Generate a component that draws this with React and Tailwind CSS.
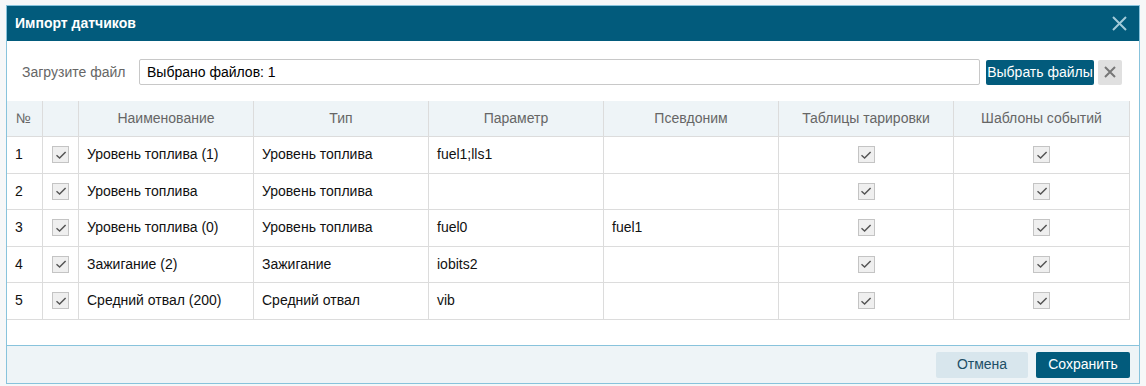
import React from "react";

const cols = [
  { w: "w-[36px]", label: "№", align: "left" },
  { w: "w-[36px]", label: "", align: "center" },
  { w: "w-[175px]", label: "Наименование", align: "center" },
  { w: "w-[175px]", label: "Тип", align: "center" },
  { w: "w-[175px]", label: "Параметр", align: "center" },
  { w: "w-[175px]", label: "Псевдоним", align: "center" },
  { w: "w-[175px]", label: "Таблицы тарировки", align: "center" },
  { w: "w-[176px]", label: "Шаблоны событий", align: "center" },
];

const rows = [
  ["1", "Уровень топлива (1)", "Уровень топлива", "fuel1;lls1", ""],
  ["2", "Уровень топлива", "Уровень топлива", "", ""],
  ["3", "Уровень топлива (0)", "Уровень топлива", "fuel0", "fuel1"],
  ["4", "Зажигание (2)", "Зажигание", "iobits2", ""],
  ["5", "Средний отвал (200)", "Средний отвал", "vib", ""],
];

function Check() {
  return (
    <span className="inline-flex h-[17px] w-[17px] items-center justify-center border border-[#c4c4c4] bg-[#efefef]">
      <svg width="12" height="12" viewBox="0 0 12 12" fill="none">
        <path d="M1.5 6.3 L4.6 9 L10.6 3" stroke="#555" strokeWidth="1.5" />
      </svg>
    </span>
  );
}

export default function App() {
  return (
    <div
      className="h-[386px] w-[1146px] bg-[#f6f7f8] pl-[6px] pt-[5px]"
      style={{ fontFamily: '"Liberation Sans", Arial, sans-serif' }}
    >
      <div className="flex h-[379px] w-[1134px] flex-col border border-[#88c3dc] bg-white">
        <div className="flex h-[35px] shrink-0 items-center justify-between bg-[#025b7c] pl-[8px] pr-[12px]">
          <span className="text-[14px] font-bold text-white">Импорт датчиков</span>
          <svg width="15" height="15" viewBox="0 0 15 15">
            <path d="M1 1 L14 14 M14 1 L1 14" stroke="#a3cad9" strokeWidth="2" />
          </svg>
        </div>
        <div className="flex flex-1 flex-col">
          <div className="flex items-center pl-[15px] pt-[18px]">
            <span className="w-[117px] text-[14px] text-[#666]">Загрузите файл</span>
            <div className="flex h-[26px] w-[841px] items-center rounded-[2px] border border-[#c8c8c8] pl-[7px] text-[14px] text-black">
              Выбрано файлов: 1
            </div>
            <button className="ml-[6px] h-[25px] w-[108px] rounded-[2px] bg-[#025b7c] text-[14px] text-white">
              Выбрать файлы
            </button>
            <div className="ml-[4px] flex h-[25px] w-[24px] items-center justify-center rounded-[2px] bg-[#e0e0e0]">
              <svg width="12" height="12" viewBox="0 0 12 12">
                <path d="M1 1 L11 11 M11 1 L1 11" stroke="#777" strokeWidth="2" />
              </svg>
            </div>
          </div>
          <div className="mt-[16px] w-[1123px]">
            <div className="flex h-[35px] bg-[#eef4f7] text-[14px] text-[#666]">
              {cols.map((c, i) => (
                <div
                  key={i}
                  className={`${c.w} flex items-center border-r border-[#dcdcdc] ${
                    c.align === "left" ? "pl-[9px]" : "justify-center"
                  }`}
                >
                  {c.label}
                </div>
              ))}
            </div>
            {rows.map((r, ri) => (
              <div key={ri} className="flex h-[36.5px] border-t border-[#dcdcdc] text-[14px] text-[#111]">
                <div className="flex w-[36px] items-center border-r border-[#dcdcdc] pl-[8px]">{r[0]}</div>
                <div className="flex w-[36px] items-center justify-center border-r border-[#dcdcdc]">
                  <Check />
                </div>
                <div className="flex w-[175px] items-center border-r border-[#dcdcdc] pl-[8px]">{r[1]}</div>
                <div className="flex w-[175px] items-center border-r border-[#dcdcdc] pl-[8px]">{r[2]}</div>
                <div className="flex w-[175px] items-center border-r border-[#dcdcdc] pl-[8px]">{r[3]}</div>
                <div className="flex w-[175px] items-center border-r border-[#dcdcdc] pl-[8px]">{r[4]}</div>
                <div className="flex w-[175px] items-center justify-center border-r border-[#dcdcdc]">
                  <Check />
                </div>
                <div className="flex w-[176px] items-center justify-center border-r border-[#dcdcdc]">
                  <Check />
                </div>
              </div>
            ))}
            <div className="border-t border-[#dcdcdc]" />
          </div>
        </div>
        <div className="flex h-[38px] shrink-0 items-center justify-end gap-[8px] border-t border-[#88c3dc] bg-[#eef4f7] pr-[9px]">
          <button className="h-[26px] w-[92px] rounded-[2px] bg-[#d8e6ed] text-[14px] text-[#1d4f66]">
            Отмена
          </button>
          <button className="h-[26px] w-[94px] rounded-[2px] bg-[#025b7c] text-[14px] text-white">
            Сохранить
          </button>
        </div>
      </div>
    </div>
  );
}
